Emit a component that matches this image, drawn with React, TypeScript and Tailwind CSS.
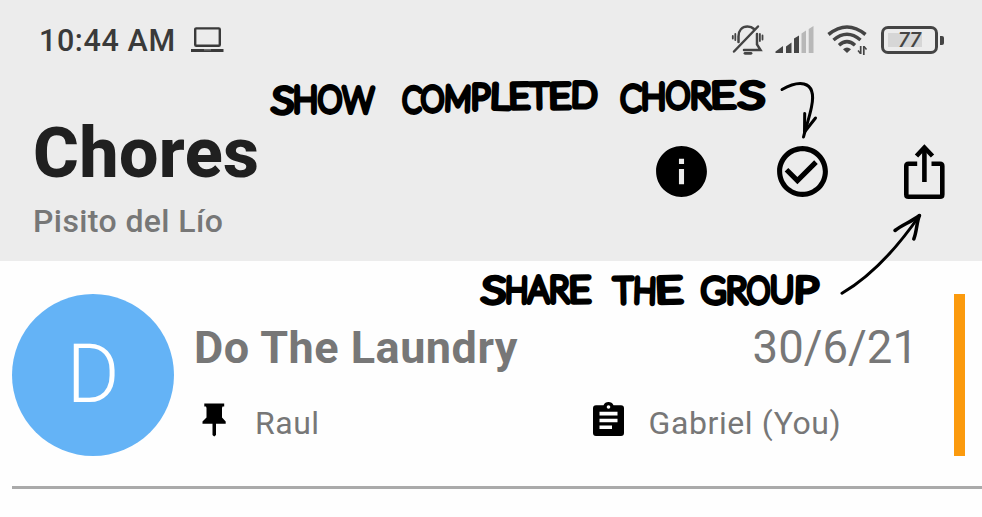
import React from "react";
import { MdCheckCircleOutline, MdInfo } from "react-icons/md";

function LaptopIcon() {
  return (
    <svg className="ml-[14px] h-[26px] w-[34px]" viewBox="0 0 34 26" fill="none" stroke="#3a3a3a">
      <rect x="5.2" y="1.4" width="24.6" height="17.4" rx="1" strokeWidth="2.4" />
      <path d="M1 23.4H33.5" strokeWidth="3" />
      <path d="M14 22.8h7" stroke="#777" strokeWidth="1.4" />
    </svg>
  );
}

function MutedBellIcon() {
  return (
    <svg className="h-[32px] w-[34px]" viewBox="731 23 34 32" fill="none" stroke="#444" strokeWidth="2.5" strokeLinecap="round">
      <path d="M738.500 41V35.500C738.500 29.500 742 25.500 747.500 25.500C750.500 25.500 752.500 26.500 754 28M757 33V43.500L760.500 49H744" />
      <path d="M758 25.500L734 50.500" strokeWidth="2.500" />
      <path d="M745 52.300h6" strokeWidth="2.800" />
      <path d="M735.300 33v6M732.800 35v2.500M759.900 33v7M762.500 34.500v4" strokeWidth="1.800" />
    </svg>
  );
}

function SignalIcon() {
  return (
    <svg className="ml-[10px] h-[28px] w-[39px]" viewBox="775 25 39 28">
      <path d="M775.500 52V50.500L783 45V52z" fill="#444" />
      <path d="M786 45.500L791.500 41.500V52H786zM794 37.500L799 34.500V52H794z" fill="#444" />
      <path d="M801.500 32.500L806 29.500V52H801.500zM808.700 28L813.500 25V52H808.700z" fill="#b8b8b8" />
    </svg>
  );
}

function WifiIcon() {
  return (
    <svg className="ml-[13px] h-[32px] w-[41px]" viewBox="827 24 41 32" fill="none" stroke="#444">
      <path d="M828.500 34.500Q847 19.500 865.500 34.500" strokeWidth="3.600" />
      <path d="M833.500 40Q847 28.500 860.500 40" strokeWidth="3.500" />
      <path d="M839 45.300Q847 38 855 45.300" strokeWidth="3.400" />
      <path d="M843 49.300Q847 45.800 851 49.300L847 53z" fill="#444" stroke="none" />
      <path d="M860.700 46V54M863.800 46V55" strokeWidth="1.700" />
      <path d="M858 50.500L860.500 53.500M866.500 49.500L864 46.500" strokeWidth="1.500" />
    </svg>
  );
}

function Battery() {
  return (
    <div className="ml-[13px] flex items-center">
      <div className="flex h-[28px] w-[57px] items-center justify-center rounded-[7px] border-[3px] border-[#444] p-[4px]">
        <div className="flex h-full w-full items-center justify-center bg-linear-to-r from-[#d6d6d6] from-78% to-[#ececec] to-78% text-[21px] leading-none font-medium text-[#444]">
          <span className="italic">77</span>
        </div>
      </div>
      <div className="ml-[2px] h-[9px] w-[4px] rounded-r-[2px] bg-[#444]" />
    </div>
  );
}

function ShareIcon() {
  return (
    <svg className="h-[58px] w-[42px]" viewBox="903 143 42 58" fill="none" stroke="#000" strokeWidth="4.600">
      <path d="M917.200 163.800H908.500Q906.300 163.800 906.300 166V194.500Q906.300 196.800 908.500 196.800H940Q942.300 196.800 942.300 194.500V166Q942.300 163.800 940 163.800H931.500" />
      <path d="M924.400 182V149" />
      <path d="M916.500 156L924.400 147.500L932.500 156" />
    </svg>
  );
}

function PinIcon() {
  return (
    <svg className="h-[34px] w-[24px]" viewBox="0 0 24 34">
      <path d="M2.300 0.500H22.200V3.500H20.500L20 5V14.500L23.700 18.500V20.800H14V32L12.200 33.500L10.500 32V20.800H0.500V18.500L4.500 14.500V5L4 3.500H2.300z" fill="#000" />
    </svg>
  );
}

function ClipboardIcon() {
  return (
    <svg className="h-[34px] w-[31px]" viewBox="0 0 31 34">
      <path d="M3 3.300H10.500Q12 0 15.500 0Q19 0 20.500 3.300H28Q31 3.300 31 6.300V31Q31 34 28 34H3Q0 34 0 31V6.300Q0 3.300 3 3.300z" fill="#000" />
      <circle cx="15.500" cy="5" r="1.800" fill="#fff" />
      <path d="M6.500 11.600H24.500M6.500 18.500H24.500M6.500 25.300H19" stroke="#fff" strokeWidth="3.600" />
    </svg>
  );
}

// Each glyph: character, x, baseline y, drawn width, tilt in degrees.
type Glyph = [string, number, number, number, number];
type Note = { size: number; glyphs: Glyph[] };

const notes: Note[] = [
  { size: 35, glyphs: [["S", 271, 112, 22, 4], ["H", 293, 112, 25, 0], ["O", 318, 112, 24, 0], ["W", 342.5, 112, 31, 1]] },
  {
    size: 34,
    glyphs: [
      ["C", 402, 111, 19, 3],
      ["O", 421, 111, 23, 0],
      ["M", 444, 110, 27, 2],
      ["P", 471, 109, 19, 0],
      ["L", 490, 108, 19, 2],
      ["E", 509, 108, 21, -1],
      ["T", 530, 108, 19, -1],
      ["E", 549, 108, 22, -1],
      ["D", 571, 106.5, 26, 1],
    ],
  },
  {
    size: 35,
    glyphs: [["C", 620, 110, 21, 3], ["H", 641, 109, 25, 0], ["O", 666, 108, 24, 0], ["R", 690, 107.5, 21, 0], ["E", 711, 107.5, 25, -1], ["S", 738, 107, 26, 3]],
  },
  { size: 35, glyphs: [["S", 481, 302, 24, 3], ["H", 505, 302, 23, 1], ["A", 528, 301.5, 21, 0], ["R", 549, 302, 20, 0], ["E", 569, 302, 22, -1]] },
  { size: 35, glyphs: [["T", 614, 303, 19, -1], ["H", 633, 302.5, 23, 2], ["E", 656, 302.5, 27, -2]] },
  { size: 35, glyphs: [["G", 701, 303, 25, 0], ["R", 726, 303, 21, 0], ["O", 747, 302.5, 23, 0], ["U", 770, 302, 24, 0], ["P", 794, 302, 24, 1]] },
];

function Annotations() {
  return (
    <svg className="pointer-events-none absolute inset-0 h-[517px] w-[982px]" viewBox="0 0 982 517" strokeLinecap="round" strokeLinejoin="round">
      <g className="font-['Lato',sans-serif] font-thin" fill="#000" stroke="#000" strokeWidth="5.800">
        {notes.map((note, i) => (
          <text key={i} fontSize={note.size}>
            {note.glyphs.map(([char, x, y, width, tilt], j) => (
              <tspan key={j} x={x} y={y} rotate={tilt} textLength={width} lengthAdjust="spacingAndGlyphs">
                {char}
              </tspan>
            ))}
          </text>
        ))}
      </g>
      <g fill="none" stroke="#000" strokeWidth="3">
        <path d="M782 89.500C790 85 797 82.500 804 84C812 86 814 95 811.500 107C809.500 117 806 127 803.500 137" />
        <path d="M804.700 113.500L804.500 132L815.500 118" />
        <path d="M842 293.300C868 278 893 254 919.500 215.500" />
        <path d="M895 230.500C902 225 911 222 919.500 215.500C916.500 222 917 231 913.800 239" strokeWidth="3.500" />
      </g>
    </svg>
  );
}

export default function App() {
  return (
    <main className="relative flex h-[517px] w-[982px] flex-col overflow-hidden bg-[#fefefe] font-['Roboto',sans-serif]">
      <header className="h-[261px] bg-[#ececec]">
        <div className="flex h-[80px] items-center pr-[38px] pl-[39px] text-[#3a3a3a]">
          <span className="w-[137px] pt-[2px] text-[30.5px] leading-[40px] font-medium tracking-[0.6px] whitespace-nowrap">10:44 AM</span>
          <LaptopIcon />
          <div className="ml-auto flex items-center">
            <MutedBellIcon />
            <SignalIcon />
            <WifiIcon />
            <Battery />
          </div>
        </div>
        <div className="flex items-start justify-between pr-[37px] pl-[33px]">
          <div className="flex flex-col pt-[33px]">
            <h1 className="text-[70px] leading-[80px] font-extrabold tracking-[0.4px] text-[#202020]">Chores</h1>
            <p className="mt-[8px] text-[32px] leading-[40px] font-medium tracking-[0.4px] text-[#777]">Pisito del Lío</p>
          </div>
          <div className="flex items-center pt-[61px]">
            <MdInfo className="h-[61px] w-[61px]" />
            <MdCheckCircleOutline className="ml-[60px] h-[61px] w-[61px]" />
            <div className="ml-[70px]">
              <ShareIcon />
            </div>
          </div>
        </div>
      </header>
      <section className="ml-[12px] flex h-[228px] items-start border-b-[3px] border-[#aaa] pt-[32.5px] pr-[17px] text-[#777]">
        <div className="flex h-[162px] w-[162px] items-center justify-center rounded-full bg-[#64b3f6] text-[81px] leading-none font-light text-white">
          D
        </div>
        <div className="ml-[20px] flex w-[724px] flex-col pt-[29px]">
          <div className="flex justify-between leading-[50px]">
            <h2 className="text-[45px] font-bold tracking-[0.5px]">Do The Laundry</h2>
            <span className="text-[45.5px]">30/6/21</span>
          </div>
          <div className="mt-[30px] flex h-[40px] items-center text-[32px] leading-[40px] tracking-[0.5px]">
            <div className="ml-[8px] flex w-[390.5px] items-center">
              <div className="-mt-[5px]">
                <PinIcon />
              </div>
              <span className="ml-[29px]">Raul</span>
            </div>
            <div className="-mt-[8px]">
              <ClipboardIcon />
            </div>
            <span className="ml-[25px] tracking-[0.6px]">Gabriel (You)</span>
          </div>
        </div>
        <div className="ml-auto h-[162px] w-[11px] bg-[#fb9a0d]" />
      </section>
      <Annotations />
    </main>
  );
}
